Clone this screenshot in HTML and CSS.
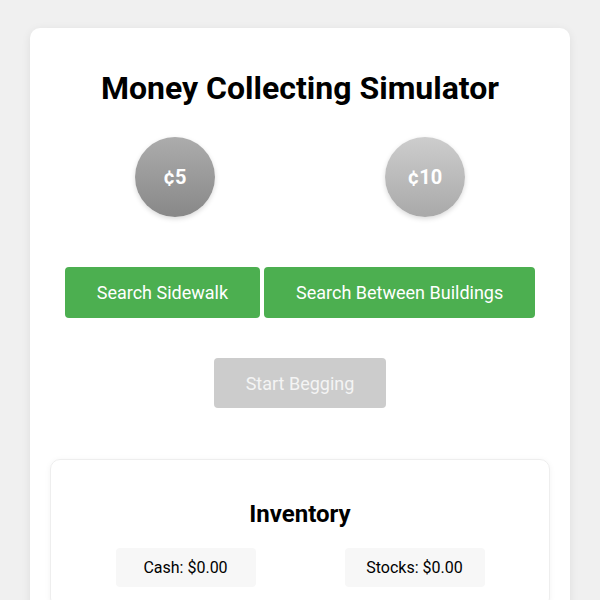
FILE: index.html
```html
<!DOCTYPE html>
<html lang="en">
<head>
	<meta charset="UTF-8">
	<title>Money Collecting Simulator</title>
	<link rel="stylesheet" href="styles.css">
</head>
<body>
	<div class="game">
		<h1>Money Collecting Simulator</h1>
		<div class="coins">
			<div class="coin nickel">¢5</div>
			<div class="coin dime">¢10</div>
		</div>
		<div class="actions">
			<button class="btn">Search Sidewalk</button>
			<button class="btn">Search Between Buildings</button>
		</div>
		<div class="actions">
			<button class="btn" disabled>Start Begging</button>
		</div>
		<div class="inventory">
			<h2>Inventory</h2>
			<div class="stats">
				<div class="stat">Cash: $0.00</div>
				<div class="stat">Stocks: $0.00</div>
			</div>
		</div>
	</div>
</body>
</html>
```

FILE: styles.css
```css
body {
	margin: 0;
	padding: 28px 30px;
	background-color: #f0f0f0;
	font-family: Roboto, "Liberation Sans", sans-serif;
	color: #000;
}
.game {
	background-color: #fff;
	border-radius: 10px;
	padding: 20px;
	box-shadow: 0 2px 10px rgba(0, 0, 0, 0.08);
	text-align: center;
}
h1 {
	font-size: 32px;
	margin: 21px 0;
}
.coins {
	display: grid;
	grid-template-columns: 1fr 1fr;
	justify-items: center;
	margin-top: 30px;
}
.coin {
	width: 80px;
	height: 80px;
	border-radius: 50%;
	display: flex;
	align-items: center;
	justify-content: center;
	color: #fff;
	font-weight: bold;
	font-size: 20px;
	box-shadow: 0 2px 5px rgba(0, 0, 0, 0.15);
}
.nickel {
	background: linear-gradient(#acacac, #888);
}
.dime {
	background: linear-gradient(#cdcdcd, #a9a9a9);
}
.actions {
	display: flex;
	justify-content: center;
	gap: 4px;
	margin-top: 50px;
}
.actions + .actions {
	margin-top: 40px;
}
.btn {
	font-family: inherit;
	font-size: 18px;
	line-height: 21px;
	padding: 15px 32px;
	border: none;
	border-radius: 4px;
	background-color: #4caf50;
	color: #fff;
}
.btn:disabled {
	background-color: #ccc;
	color: #f4f4f4;
	padding: 14.5px 32px;
}
.inventory {
	margin-top: 51px;
	border: 1px solid #eee;
	border-radius: 10px;
	padding: 20px;
	box-shadow: 0 1px 6px rgba(0, 0, 0, 0.05);
}
h2 {
	font-size: 24px;
	margin: 20px 0;
}
.stats {
	display: grid;
	grid-template-columns: 1fr 1fr;
	justify-items: center;
}
.stat {
	width: 140px;
	box-sizing: border-box;
	padding: 10px 0;
	background-color: #f7f7f7;
	border-radius: 4px;
	font-size: 16px;
}
```
